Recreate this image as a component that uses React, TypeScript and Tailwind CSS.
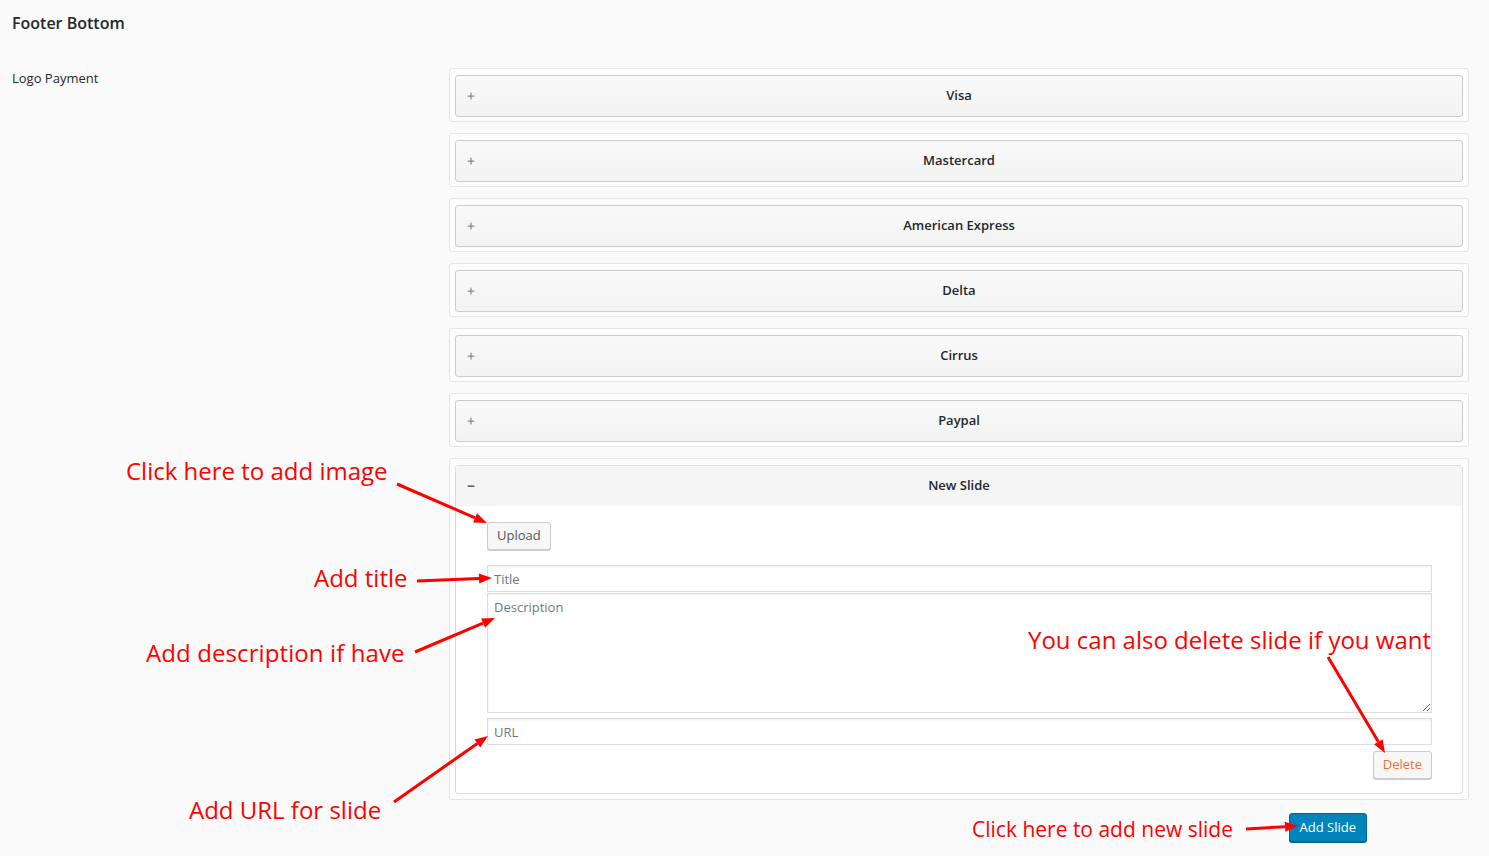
import { Plus, Minus } from "lucide-react";

const items = ["Visa", "Mastercard", "American Express", "Delta", "Cirrus", "Paypal"];

function Collapsed({ title }: { title: string }) {
  return (
    <div className="rounded-[3px] border border-[#e5e5e5] bg-[#fdfdfd] px-[5px] pb-[4px] pt-[6px]">
      <div className="relative flex h-[42px] items-center justify-center rounded-[3px] border border-[#cccccc] bg-gradient-to-b from-[#f9f9f9] to-[#f3f3f3]">
        <span className="absolute left-[10px] text-[#888]">
          <Plus size={10} strokeWidth={3} />
        </span>
        <span className="text-[13px] font-semibold text-[#23282d]">{title}</span>
      </div>
    </div>
  );
}

const inputCls =
  "block w-[945px] border border-[#dddddd] bg-white px-[6px] text-[13px] text-[#32373c] shadow-[inset_0_1px_2px_rgba(0,0,0,0.07)] outline-none placeholder:text-[#72777c]";

function Expanded() {
  return (
    <div className="rounded-[3px] border border-[#e5e5e5] bg-[#fdfdfd] px-[5px] pb-[5px] pt-[6px]">
      <div className="rounded-[3px] border border-[#dddddd] bg-white">
        <div className="relative flex h-[40px] items-center justify-center bg-[#f5f5f5]">
          <span className="absolute left-[10px] text-[#333]">
            <Minus size={10} strokeWidth={3} />
          </span>
          <span className="text-[13px] font-semibold text-[#23282d]">New Slide</span>
        </div>
        <div className="pl-[31px] pr-[30px] pb-[14px] pt-[16px]">
          <button className="h-[28px] rounded-[3px] border border-[#cccccc] bg-[#f7f7f7] px-[9px] text-[13px] text-[#555] shadow-[0_1px_0_#ccc]">
            Upload
          </button>
          <input className={inputCls + " mt-[15px] h-[27px]"} placeholder="Title" />
          <textarea
            className={inputCls + " mt-px h-[120px] w-[944px] pt-[4px]"}
            placeholder="Description"
          />
          <input className={inputCls + " mt-[5px] h-[27px]"} placeholder="URL" />
          <div className="mt-[6px] flex justify-end">
            <button className="h-[28px] rounded-[3px] border border-[#cccccc] bg-[#f7f7f7] px-[9px] text-[13px] text-[#f56e28] shadow-[0_1px_0_#ccc]">
              Delete
            </button>
          </div>
        </div>
      </div>
    </div>
  );
}

function Arrow({ x1, y1, x2, y2 }: { x1: number; y1: number; x2: number; y2: number }) {
  const a = Math.atan2(y2 - y1, x2 - x1);
  const L = 13;
  const W = 5;
  const bx = x2 - L * Math.cos(a);
  const by = y2 - L * Math.sin(a);
  const p1 = `${bx + W * Math.sin(a)},${by - W * Math.cos(a)}`;
  const p2 = `${bx - W * Math.sin(a)},${by + W * Math.cos(a)}`;
  return (
    <g>
      <line x1={x1} y1={y1} x2={bx} y2={by} stroke="#ff0000" strokeWidth={3} />
      <polygon points={`${x2},${y2} ${p1} ${p2}`} fill="#ff0000" />
    </g>
  );
}

const note = "absolute whitespace-nowrap leading-none text-[#ff0000]";

export default function App() {
  return (
    <div
      className="relative min-h-screen bg-[#fafafa] text-[#23282d]"
      style={{ fontFamily: '"Open Sans", "Noto Sans", sans-serif' }}
    >
      <h2 className="px-[12px] pt-[12px] text-[16px] font-semibold leading-[22px]">Footer Bottom</h2>
      <div className="mt-[34px] flex">
        <div className="w-[449px] pl-[12px] pt-[1px] text-[13px]">Logo Payment</div>
        <div className="flex w-[1020px] flex-col gap-[11px]">
          {items.map((t) => (
            <Collapsed key={t} title={t} />
          ))}
          <Expanded />
          <div className="mt-[2px] flex justify-end pr-[102px]">
            <button className="h-[29px] rounded-[3px] border border-[#006799] bg-[#0085ba] px-[10px] text-[13px] text-white shadow-[0_1px_0_#006799]">
              Add Slide
            </button>
          </div>
        </div>
      </div>

      <span className={note + " text-[24px]"} style={{ left: 126, top: 459 }}>Click here to add image</span>
      <span className={note + " text-[24px]"} style={{ left: 314, top: 566 }}>Add title</span>
      <span className={note + " text-[24px] tracking-[0.1px]"} style={{ left: 146, top: 641 }}>Add description if have</span>
      <span className={note + " text-[24px]"} style={{ left: 189, top: 798 }}>Add URL for slide</span>
      <span className={note + " text-[24px]"} style={{ left: 1028, top: 628 }}>You can also delete slide if you want</span>
      <span className={note + " text-[21px]"} style={{ left: 972, top: 819 }}>Click here to add new slide</span>

      <svg className="pointer-events-none absolute left-0 top-0" width={1489} height={856}>
        <Arrow x1={397} y1={484} x2={487} y2={523} />
        <Arrow x1={417} y1={581} x2={492} y2={578} />
        <Arrow x1={415} y1={652} x2={495} y2={618} />
        <Arrow x1={394} y1={802} x2={488} y2={736} />
        <Arrow x1={1328} y1={657} x2={1385} y2={753} />
        <Arrow x1={1246} y1={829} x2={1298} y2={826} />
      </svg>
    </div>
  );
}
